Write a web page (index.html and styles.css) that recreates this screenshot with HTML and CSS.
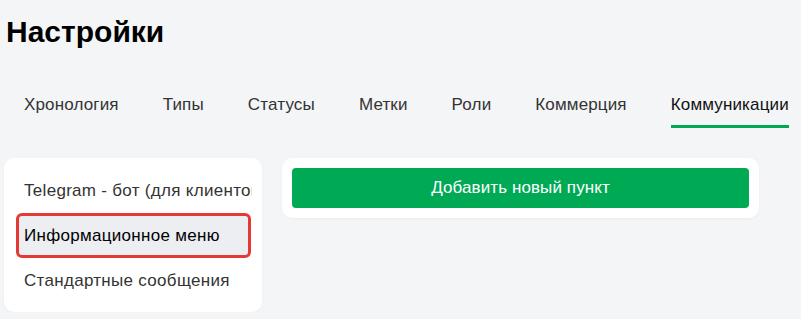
FILE: index.html
```html
<!DOCTYPE html>
<html lang="ru">
<head>
    <meta charset="UTF-8">
    <meta name="viewport" content="width=device-width, initial-scale=1.0">
    <title>Настройки</title>
    <link rel="stylesheet" href="styles.css">
</head>
<body>
    <div class="settings-page">
        <h1 class="page-title">Настройки</h1>

        <div class="tabs-row">
            <div class="tab">Хронология</div>
            <div class="tab">Типы</div>
            <div class="tab">Статусы</div>
            <div class="tab">Метки</div>
            <div class="tab">Роли</div>
            <div class="tab">Коммерция</div>
            <div class="tab tab-active">Коммуникации</div>
        </div>

        <div class="content-row">
            <div class="side-menu">
                <div class="menu-item">Telegram - бот (для клиентов)</div>
                <div class="menu-item menu-item-active">Информационное меню</div>
                <div class="menu-item">Стандартные сообщения</div>
            </div>
            <div class="main-panel">
                <button class="add-button" type="button">Добавить новый пункт</button>
            </div>
        </div>
    </div>
</body>
</html>
```

FILE: styles.css
```css
body {
    font-family: "Liberation Sans", Arial, sans-serif;
    margin: 0;
    background-color: #f4f5f7;
    color: #333;
}

.settings-page {
    padding: 0 4px;
}

.page-title {
    margin: 0;
    padding: 15px 0 0 2px;
    font-size: 30px;
    line-height: 34px;
    font-weight: bold;
    color: #000;
}

.tabs-row {
    display: flex;
    gap: 44px;
    padding-left: 20px;
    margin-top: 46px;
}

.tab {
    font-size: 17px;
    line-height: 20px;
    letter-spacing: 0.15px;
    padding-bottom: 10px;
    border-bottom: 3px solid transparent;
    color: #333;
    white-space: nowrap;
}

.tab-active {
    color: #111;
    border-bottom-color: #00a854;
}

.content-row {
    display: flex;
    align-items: flex-start;
    gap: 20px;
    margin-top: 30px;
}

.side-menu {
    width: 258px;
    box-sizing: border-box;
    padding: 10px 10px 9px 12px;
    background-color: #fff;
    border-radius: 10px;
    box-shadow: 0 1px 3px rgba(0, 0, 0, 0.04);
}

/* длинные названия обрезаются по краю карточки */
.menu-item {
    height: 45px;
    line-height: 45px;
    padding-left: 8px;
    font-size: 17px;
    letter-spacing: 0.3px;
    color: #333;
    white-space: nowrap;
    overflow: hidden;
    box-sizing: border-box;
}

.menu-item-active {
    background-color: #eceef1;
    color: #000;
    border: 3px solid #e53935;
    border-radius: 6px;
    line-height: 39px;
    padding-left: 5px;
    margin-right: 1px;
}

.main-panel {
    width: 477px;
    box-sizing: border-box;
    padding: 10px;
    background-color: #fff;
    border-radius: 10px;
    box-shadow: 0 1px 3px rgba(0, 0, 0, 0.04);
}

.add-button {
    display: block;
    width: 100%;
    height: 40px;
    border: none;
    border-radius: 4px;
    background-color: #00aa55;
    color: #fff;
    font-family: inherit;
    font-size: 17px;
    letter-spacing: 0.1px;
    cursor: pointer;
}
```
